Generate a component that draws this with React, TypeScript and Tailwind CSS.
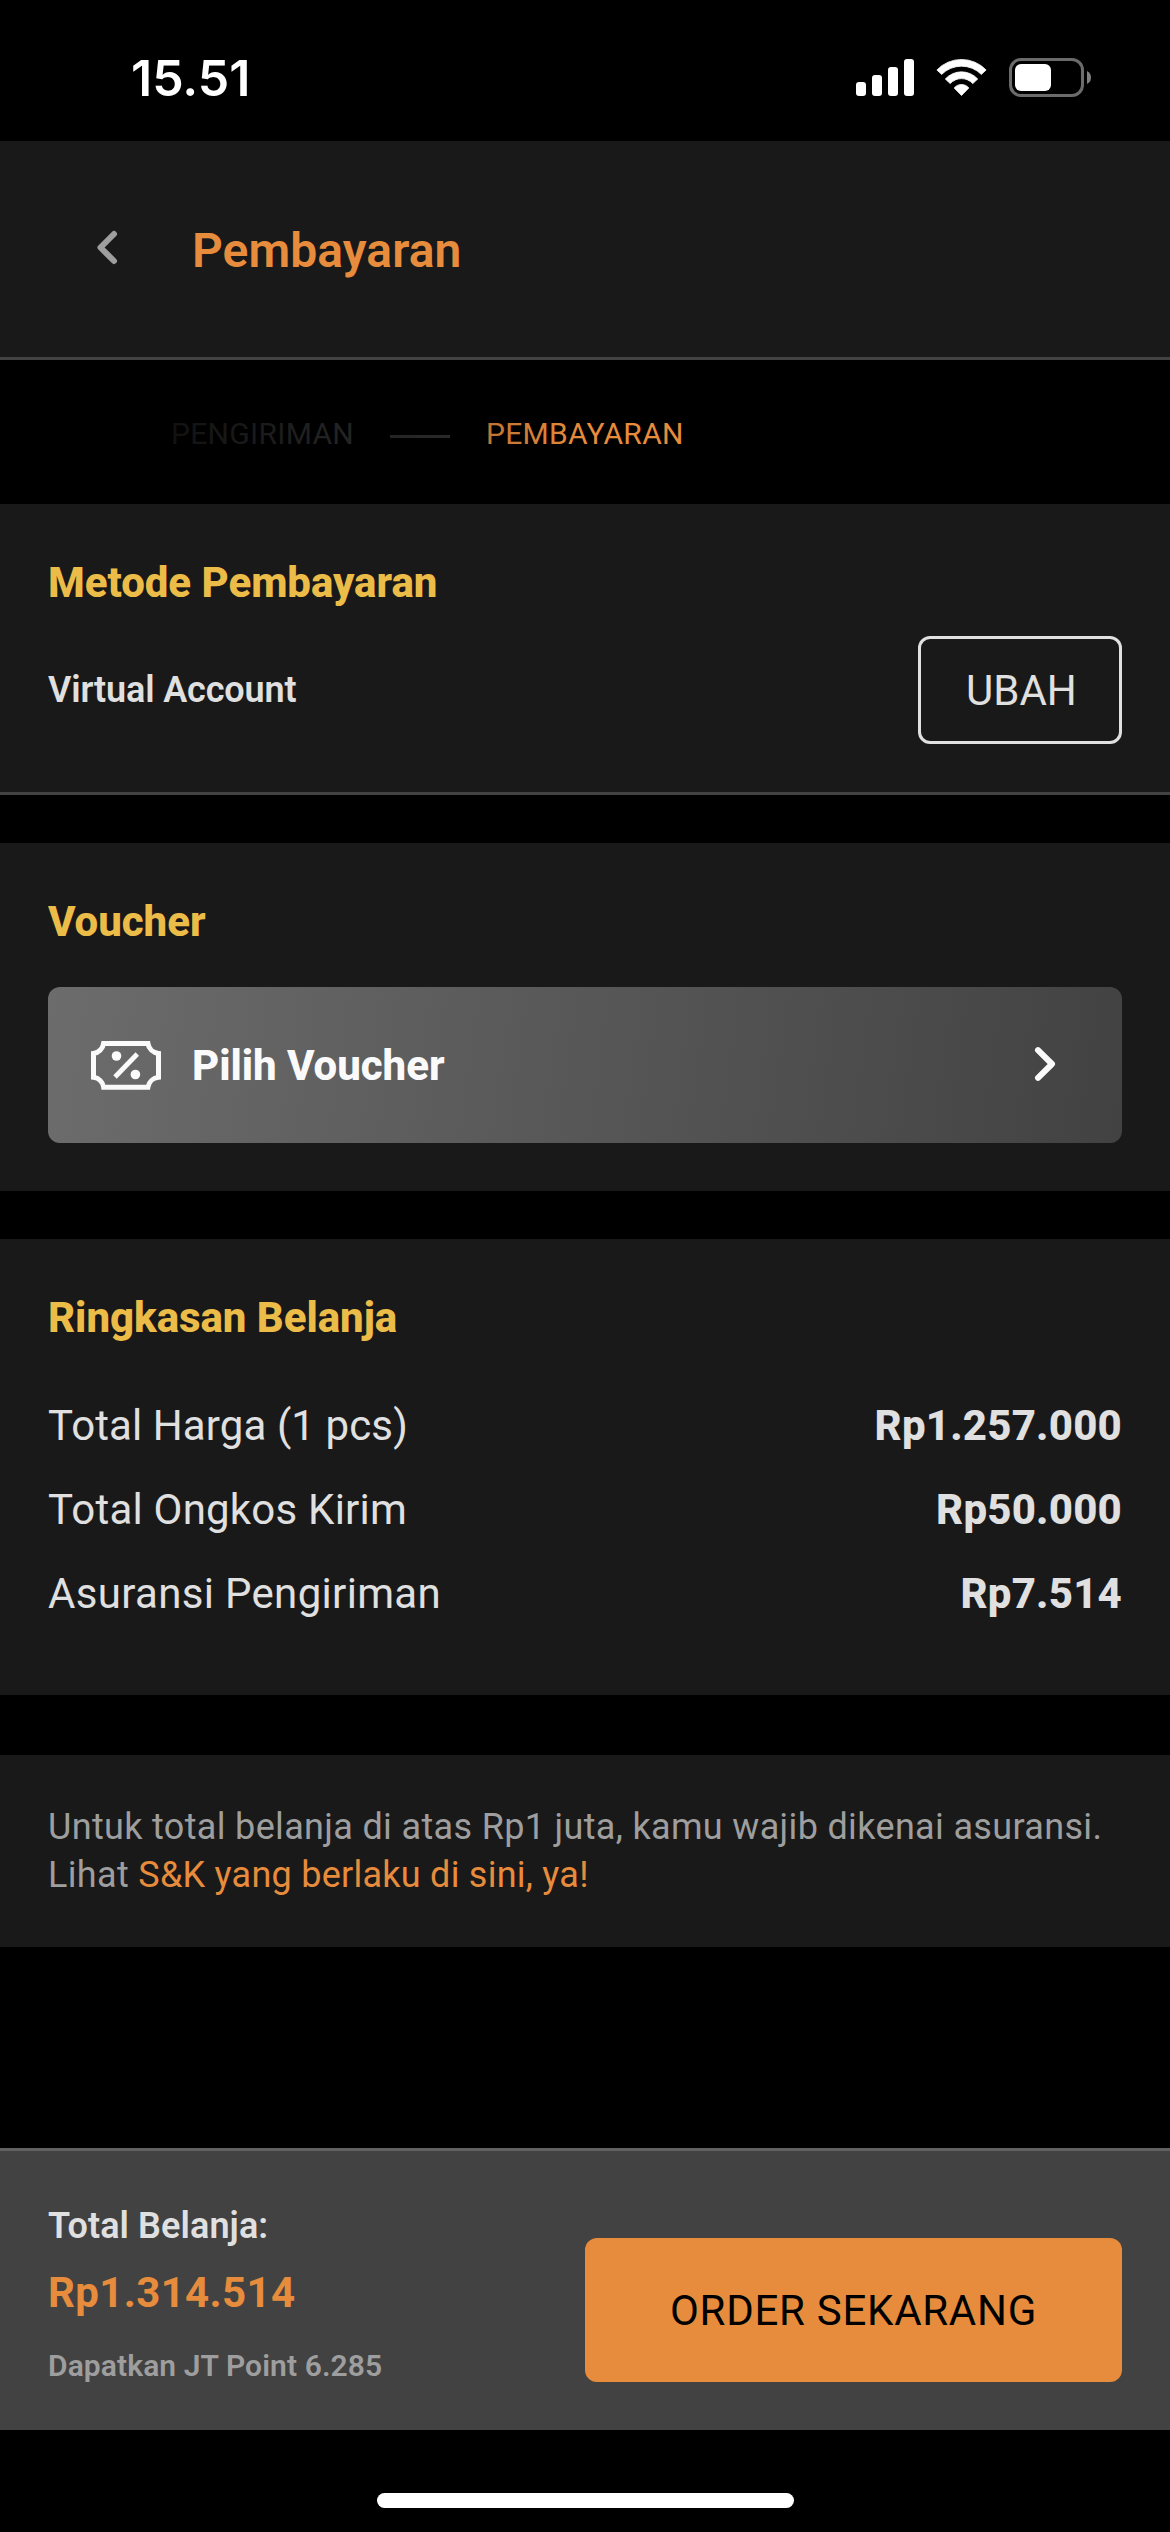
import React from "react";

function SignalIcon() {
  return (
    <svg width="58" height="37" viewBox="0 0 58 37" fill="#fff" aria-hidden="true">
      <rect x="0" y="23" width="10" height="14" rx="3" />
      <rect x="16" y="16" width="10" height="21" rx="3" />
      <rect x="32" y="8" width="10" height="29" rx="3" />
      <rect x="48" y="0" width="10" height="37" rx="3" />
    </svg>
  );
}

function WifiIcon() {
  return (
    <svg width="51" height="37" viewBox="936 59 51 37" fill="#fff" stroke="#fff" strokeWidth="0.8" strokeLinejoin="round" aria-hidden="true">
      <path d="M936.9 70 A33.9 33.9 0 0 1 986.1 70 L981.3 74.4 A28 28 0 0 0 941.7 74.4 Z" />
      <path d="M945.3 79 A21.9 21.9 0 0 1 977.7 79 L972.8 83.6 A15.3 15.3 0 0 0 950.2 83.6 Z" />
      <path d="M954.2 88 A9.3 9.3 0 0 1 968.8 88 L961.5 95.5 Z" />
    </svg>
  );
}

function BatteryIcon() {
  return (
    <svg width="82" height="39" viewBox="0 0 82 39" aria-hidden="true">
      <rect x="1.5" y="1.5" width="72" height="36" rx="10.5" fill="none" stroke="#6b6b6b" strokeWidth="3" />
      <rect x="6" y="6" width="36" height="27" rx="6" fill="#fff" />
      <path d="M78 13 Q82 15 82 19.5 Q82 24 78 26 Z" fill="#7f7f7f" />
    </svg>
  );
}

function VoucherIcon() {
  return (
    <svg width="70" height="49" viewBox="0 0 70 49" fill="none" aria-hidden="true">
      <path
        d="M12.6 2.5 H56.9 A12 12 0 0 0 67.5 12.4 V36.3 A12 12 0 0 0 56.9 46.2 H12.6 A12 12 0 0 0 2.5 36.3 V12.4 A12 12 0 0 0 12.6 2.5 Z"
        stroke="#fafafa"
        strokeWidth="5"
      />
      <path d="M24 36 L46.3 13" stroke="#fafafa" strokeWidth="4.8" />
      <circle cx="25.5" cy="15" r="4.8" fill="#fafafa" />
      <circle cx="44.4" cy="33.5" r="4.8" fill="#fafafa" />
    </svg>
  );
}

const summary = [
  { label: "Total Harga (1 pcs)", value: "Rp1.257.000", tracking: "tracking-[0.1px]" },
  { label: "Total Ongkos Kirim", value: "Rp50.000", tracking: "tracking-[0.22px]" },
  { label: "Asuransi Pengiriman", value: "Rp7.514", tracking: "tracking-[0.33px]" },
];

function SectionTitle({ children }: { children: React.ReactNode }) {
  return <h2 className="text-[42px] font-extrabold leading-[48px] tracking-[-0.05px] text-[#ecbc48]">{children}</h2>;
}

export default function App() {
  return (
    <div className="flex h-[2532px] w-[1170px] flex-col overflow-hidden bg-black font-['Roboto',sans-serif]">
      <div className="flex h-[141px] shrink-0 items-start justify-between pl-[131px] pr-[79px]">
        <span className="mt-12 font-['Inter',sans-serif] text-[50px] font-semibold leading-[60px] text-white">15.51</span>
        <div className="mt-[58px] flex items-center">
          <SignalIcon />
          <div className="ml-[22px]">
            <WifiIcon />
          </div>
          <div className="ml-[22px]">
            <BatteryIcon />
          </div>
        </div>
      </div>

      <header className="flex h-[219px] shrink-0 items-start border-b-[3px] border-[#424242] bg-[#191919] pl-24">
        <button className="mt-[88px] w-24" aria-label="Kembali">
          <svg width="24" height="36" viewBox="0 0 24 36" fill="none" aria-hidden="true">
            <path d="M18 5 L4.5 18.5 L18 32" stroke="#9e9e9e" strokeWidth="6" strokeLinecap="round" strokeLinejoin="round" />
          </svg>
        </button>
        <h1 className="mt-[82px] text-[48px] font-semibold leading-[56px] tracking-[0.06px] text-[#e78c3c]">Pembayaran</h1>
      </header>

      <nav className="relative flex h-36 shrink-0 items-start pl-[171px] pt-14 text-[30px] leading-9 tracking-[0.3px]">
        <span className="w-[219px] text-[#3c3c3c]">PENGIRIMAN</span>
        <span className="mt-[19px] h-[3px] w-[60px] bg-[#363636]" />
        <span className="ml-9 text-[#e78c3c]">PEMBAYARAN</span>
        <div className="absolute inset-y-0 left-0 w-[585px] bg-[linear-gradient(to_right,#000,transparent)]" />
      </nav>

      <section className="h-[291px] shrink-0 border-b-[3px] border-[#424242] bg-[#191919] px-12 pt-[55px]">
        <SectionTitle>Metode Pembayaran</SectionTitle>
        <div className="mt-[29px] flex items-center justify-between">
          <span className="text-[36px] font-semibold leading-[48px] tracking-[-0.15px] text-[#e0e0e0]">Virtual Account</span>
          <button className="h-[108px] w-[204px] rounded-xl border-[3px] border-[#e0e0e0] pl-[45px] pt-0.5 text-left text-[42px] leading-[48px] text-[#e0e0e0]">
            UBAH
          </button>
        </div>
      </section>

      <section className="mt-12 h-[348px] shrink-0 bg-[#191919] px-12 pt-[55px]">
        <SectionTitle>Voucher</SectionTitle>
        <button className="mt-[41px] flex h-[156px] w-full items-center rounded-xl bg-[linear-gradient(98deg,#6c6c6c,#424242)] pl-[43px] pr-16 text-left">
          <VoucherIcon />
          <span className="ml-[31px] mt-0.5 flex-1 text-[42px] font-extrabold leading-[48px] tracking-[-0.05px] text-[#fafafa]">Pilih Voucher</span>
          <svg className="-mt-[3px]" width="26" height="36" viewBox="0 0 26 36" fill="none" aria-hidden="true">
            <path d="M6 4.2 L20 18 L6 31.8" stroke="#fafafa" strokeWidth="6" strokeLinecap="round" strokeLinejoin="round" />
          </svg>
        </button>
      </section>

      <section className="mt-12 h-[456px] shrink-0 bg-[#191919] px-12 pt-[55px]">
        <SectionTitle>Ringkasan Belanja</SectionTitle>
        <div className="mt-[60px] flex flex-col gap-9">
          {summary.map((row) => (
            <div key={row.label} className="flex justify-between text-[42px] leading-[48px] text-[#e0e0e0]">
              <span className={row.tracking}>{row.label}</span>
              <span className="font-extrabold tracking-[0.2px]">{row.value}</span>
            </div>
          ))}
        </div>
      </section>

      <section className="mt-[60px] h-48 shrink-0 bg-[#191919] px-12 pt-12">
        <p className="whitespace-nowrap text-[36px] leading-[48px] tracking-[0.34px] text-[#9e9e9e]">
          Untuk total belanja di atas Rp1 juta, kamu wajib dikenai asuransi.
          <br />
          Lihat <span className="tracking-[0.25px] text-[#e78c3c]">S&amp;K yang berlaku di sini, ya!</span>
        </p>
      </section>

      <footer className="mt-[201px] flex h-[282px] shrink-0 items-start justify-between border-t-[3px] border-[#616161] bg-[#424242] px-12">
        <div className="flex flex-col pt-[51px]">
          <span className="text-[36px] font-semibold leading-[48px] tracking-[0.1px] text-[#e0e0e0]">Total Belanja:</span>
          <span className="mt-[19px] text-[42px] font-bold leading-[48px] tracking-[0.35px] text-[#e78c3c]">Rp1.314.514</span>
          <span className="mt-[31px] text-[30px] font-semibold leading-9 tracking-[0.1px] text-[#9e9e9e]">Dapatkan JT Point 6.285</span>
        </div>
        <button className="mt-[87px] h-36 w-[537px] rounded-xl bg-[#e78c3c] pt-0.5 text-[42px] leading-[48px] tracking-[0.72px] text-black">
          ORDER SEKARANG
        </button>
      </footer>

      <div className="mt-[63px] h-[15px] w-[417px] shrink-0 self-center rounded-full bg-white" />
    </div>
  );
}
